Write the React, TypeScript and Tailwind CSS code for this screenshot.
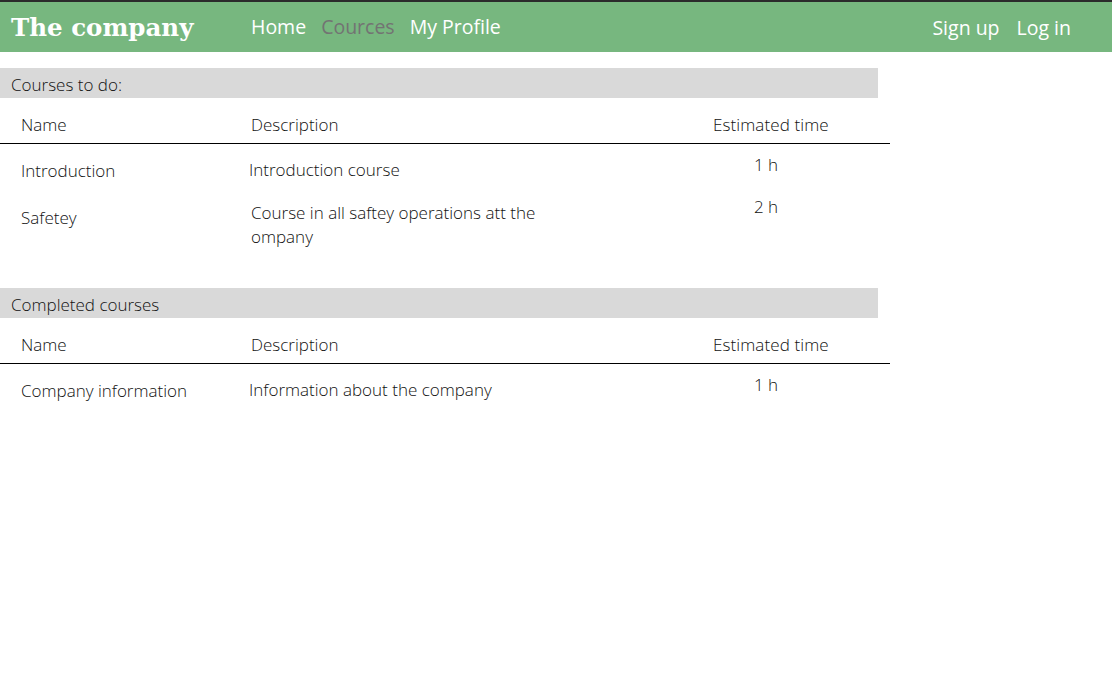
type Course = {
  name: string;
  description: string;
  time: string;
  height: string;
  pads: [string, string, string];
};

const todo: Course[] = [
  {
    name: "Introduction",
    description: "Introduction course",
    time: "1 h",
    height: "h-[50px]",
    pads: ["pt-[15px]", "pt-[14px] pl-[249px]", "pt-[9px]"],
  },
  {
    name: "Safetey",
    description: "Course in all saftey operations att the ompany",
    time: "2 h",
    height: "h-[60px]",
    pads: ["pt-[12px]", "pt-[7px] pl-[251px]", "pt-[1px]"],
  },
];

const completed: Course[] = [
  {
    name: "Company information",
    description: "Information about the company",
    time: "1 h",
    height: "h-[50px]",
    pads: ["pt-[15px]", "pt-[14px] pl-[249px]", "pt-[9px]"],
  },
];

const CourseTable = ({ title, rows }: { title: string; rows: Course[] }) => {
  return (
    <section className="text-[17px] font-light text-[#111]">
      <div className="w-[878px] h-[30px] bg-[#d9d9d9] pl-[11px] flex items-center pt-[3px]">{title}</div>
      <div className="w-[890px] border-b border-black h-[46px] flex items-end pb-[6px]">
        <span className="pl-[21px] w-[251px]">Name</span>
        <span className="w-[462px]">Description</span>
        <span className="tracking-[0.1px]">Estimated time</span>
      </div>
      {rows.map((r) => (
        <div key={r.name} className={`relative flex leading-6 ${r.height}`}>
          <span className={`pl-[21px] w-[249px] ${r.pads[0]}`}>{r.name}</span>
          <span className={`absolute left-0 top-0 w-[570px] ${r.pads[1]}`}>{r.description}</span>
          <span className={`ml-[505px] ${r.pads[2]}`}>{r.time}</span>
        </div>
      ))}
    </section>
  );
};

export default function App() {
  return (
    <div className="w-[1112px] h-[690px] bg-white" style={{ fontFamily: '"Open Sans", "Noto Sans", sans-serif' }}>
      <header className="h-[52px] border-t-2 border-[#2b2b2b] bg-[#77b77f] flex items-center text-white">
        <h1
          className="pl-[11px] w-[251px] text-[24.5px] font-bold pt-[3px]"
          style={{ fontFamily: '"DejaVu Serif", "Liberation Serif", serif' }}
        >
          The company
        </h1>
        <nav className="flex gap-[15px] text-[19.5px]">
          <a>Home</a>
          <a className="text-[#737373]">Cources</a>
          <a>My Profile</a>
        </nav>
        <div className="ml-auto mr-[41px] flex gap-[17px] text-[19.5px] pt-[2px]">
          <a>Sign up</a>
          <a>Log in</a>
        </div>
      </header>
      <div className="pt-[16px]">
        <CourseTable title="Courses to do:" rows={todo} />
        <div className="h-[34px]" />
        <CourseTable title="Completed courses" rows={completed} />
      </div>
    </div>
  );
}
